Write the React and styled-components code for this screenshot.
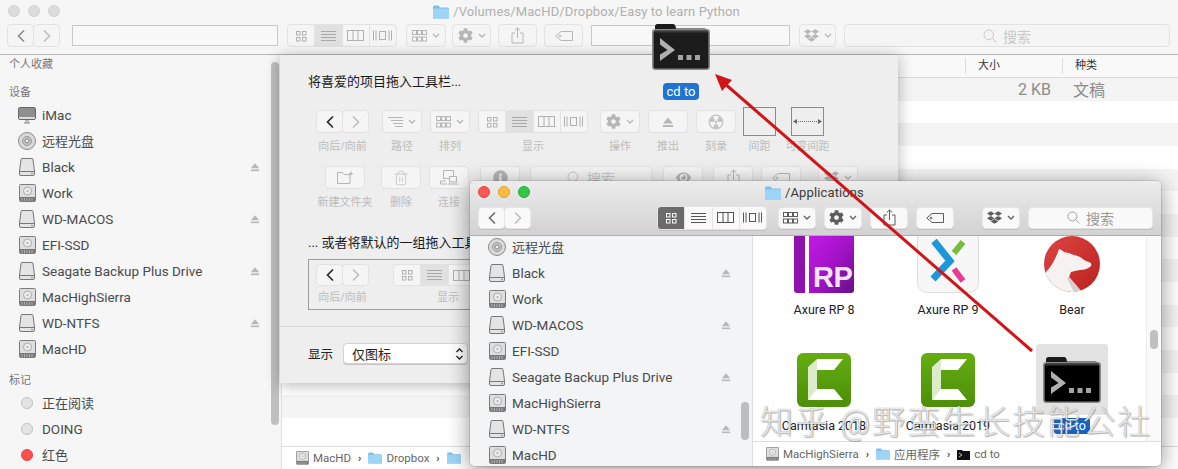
import React from "react";
import styled, { createGlobalStyle } from "styled-components";
import { FaCog, FaDropbox, FaInfoCircle, FaEye } from "react-icons/fa";
import { Trash2 } from "lucide-react";

const Global = createGlobalStyle`
  html, body { margin: 0; padding: 0; background: #8f8f8f; }
  body { font-family: "Roboto", "Noto Sans CJK SC", sans-serif; }
  * { box-sizing: border-box; }
`;

const Desktop = styled.div`
  position: relative;
  width: 1178px;
  height: 469px;
  overflow: hidden;
  background: #e9e9e9;
`;

const BackWindow = styled.div`
  position: absolute;
  inset: 0;
  display: flex;
  flex-direction: column;
  background: #f6f6f6;
  border-radius: 5px 5px 0 0;
`;

const BackHeader = styled.header`
  flex: none;
  height: 55px;
  background: #f6f6f6;
  border-bottom: 1px solid #b4b4b4;
`;

const TitleBar = styled.div`
  position: relative;
  height: 23px;
  display: flex;
  align-items: center;
  justify-content: center;
  gap: 4px;
  font-size: 13px;
  color: ${(p) => (p.$active ? "#3b3b3b" : "#b0b0b0")};
  letter-spacing: 0.12px;
`;

const BackTitle = styled(TitleBar)`
  padding-right: 5px;
`;

const FrontTitle = styled(TitleBar)`
  padding-right: 2px;
`;

const Lights = styled.div`
  position: absolute;
  left: 8px;
  top: 5px;
  display: flex;
  gap: 8px;
`;

const Light = styled.span`
  width: 12px;
  height: 12px;
  border-radius: 50%;
  background: ${(p) => p.$c};
  border: 1px solid ${(p) => p.$b};
`;

const ToolRow = styled.div`
  display: flex;
  align-items: center;
  height: 23px;
  padding-left: ${(p) => p.$pad}px;
  margin-top: ${(p) => p.$mt || 1}px;
`;

const Field = styled.div`
  flex: none;
  width: ${(p) => p.$w}px;
  height: 21px;
  margin-left: ${(p) => p.$ml}px;
  border: 1px solid #c9c9c9;
  background: #f8f8f8;
`;

const Btn = styled.div`
  flex: none;
  display: flex;
  align-items: center;
  justify-content: center;
  gap: 5px;
  width: ${(p) => p.$w || 39}px;
  height: ${(p) => p.$h || 23}px;
  margin-left: ${(p) => p.$ml || 0}px;
  border-radius: 4px;
  color: ${(p) => (p.$live ? "#5d5d5d" : "#b6b6b6")};
  background: ${(p) => (p.$live ? "#f9f9f9" : "#f5f5f5")};
  border: 1px solid ${(p) => (p.$live ? "#e6e6e6" : "#e2e2e2")};
  box-shadow: ${(p) => (p.$live ? "0 1px 0 #c2c2c2" : "none")};
`;

const NavPair = styled.div`
  flex: none;
  display: flex;
  margin-left: ${(p) => p.$ml || 0}px;
`;

const NavBtn = styled(Btn)`
  width: ${(p) => p.$w || 27}px;
  height: ${(p) => p.$h || 23}px;
  color: ${(p) => p.$ink};
  & + & { margin-left: -1px; }
`;

const Seg = styled.div`
  flex: none;
  display: flex;
  width: ${(p) => p.$w || 110}px;
  height: ${(p) => p.$h || 23}px;
  margin-left: ${(p) => p.$ml || 0}px;
  border-radius: 4px;
  overflow: hidden;
  border: 1px solid ${(p) => (p.$live ? "#e4e4e4" : "#e2e2e2")};
  background: ${(p) => (p.$live ? "#f9f9f9" : "#f5f5f5")};
  box-shadow: ${(p) => (p.$live ? "0 1px 0 #c2c2c2" : "none")};
`;

const SegCell = styled.div`
  flex: 1;
  display: flex;
  align-items: center;
  justify-content: center;
  color: ${(p) => (p.$on ? (p.$live ? "#fff" : "#a8a8a8") : p.$live ? "#555" : "#b0b0b0")};
  background: ${(p) => (p.$on ? (p.$live ? "#6b6b6b" : "#e1e1e1") : "transparent")};
  & + & { border-left: 1px solid ${(p) => (p.$live ? "#e4e4e4" : "#e6e6e6")}; }
`;

const SearchBox = styled(Btn)`
  font-size: 14px;
  color: ${(p) => (p.$live ? "#9a9a9a" : "#c8c8c8")};
  gap: 6px;
`;

const Body = styled.div`
  flex: 1;
  min-height: 0;
  display: flex;
`;

const Sidebar = styled.aside`
  position: relative;
  flex: none;
  width: ${(p) => p.$w}px;
  overflow: hidden;
  background: ${(p) => p.$bg};
  border-right: 1px solid #dedede;
`;

const SideList = styled.div`
  margin-top: ${(p) => p.$mt || 0}px;
`;

const SideHead = styled.div`
  height: 18px;
  line-height: 20px;
  margin: ${(p) => p.$mt || 0}px 0 1px;
  padding-left: 9px;
  font-size: 11px;
  color: #777;
`;

const SideRow = styled.div`
  display: flex;
  align-items: center;
  height: 26px;
  padding-left: 18px;
  font-size: 13.5px;
  color: #4a4a4a;
`;

const SideIcon = styled.span`
  flex: none;
  display: flex;
  justify-content: center;
  width: 18px;
  margin-right: 6px;
`;

const SideText = styled.span`
  flex: 1;
  white-space: nowrap;
  font-size: ${(p) => (p.$zh ? "13px" : "inherit")};
  margin-bottom: ${(p) => (p.$zh ? "2px" : "0")};
`;

const EjectMark = styled.span`
  flex: none;
  display: flex;
  width: 10px;
  margin-right: ${(p) => p.$mr}px;
  color: #b8b8b8;
`;

const TagDot = styled.span`
  width: 12px;
  height: 12px;
  border-radius: 50%;
  background: ${(p) => p.$c};
  border: 1px solid ${(p) => p.$b};
`;

const Thumb = styled.div`
  position: absolute;
  left: ${(p) => p.$x}px;
  top: ${(p) => p.$y}px;
  width: 8px;
  height: ${(p) => p.$h}px;
  border-radius: 4px;
  background: ${(p) => p.$c || "#c0c0c0"};
`;

const ListPane = styled.main`
  flex: 1;
  min-width: 0;
  display: flex;
  flex-direction: column;
  background: #fff;
`;

const ListHead = styled.div`
  flex: none;
  height: 23px;
  display: flex;
  align-items: center;
  border-bottom: 1px solid #d9d9d9;
  background: #f9f9f9;
  font-size: 11px;
  color: #333;
`;

const ColHead = styled.span`
  width: ${(p) => p.$w}px;
  margin-left: ${(p) => p.$ml || 0}px;
  padding-left: 12px;
  line-height: 16px;
  border-left: 1px solid #dcdcdc;
`;

const RowStack = styled.div`
  flex: 1;
  min-height: 0;
  overflow: hidden;
`;

const ListRow = styled.div`
  display: flex;
  align-items: center;
  height: 22.67px;
  background: ${(p) => (p.$odd ? "#f4f4f4" : "#fff")};
  font-size: 16px;
  color: #8b8b8b;
`;

const SizeCell = styled.span`
  width: 769px;
  text-align: right;
`;

const KindCell = styled.span`
  margin-left: 22px;
`;

const PathBar = styled.div`
  flex: none;
  height: ${(p) => p.$h}px;
  display: flex;
  align-items: center;
  gap: 4px;
  padding-left: ${(p) => p.$pad}px;
  border-top: 1px solid #dcdcdc;
  background: #fff;
  font-size: 11.5px;
  color: #666;
  white-space: nowrap;
`;

const Crumb = styled.span`
  margin: 0 3px;
  font-size: 11px;
  font-weight: 700;
  color: #444;
`;

/* customise sheet */
const Sheet = styled.section`
  position: absolute;
  left: 280px;
  top: 55px;
  width: 618px;
  height: 328px;
  overflow: hidden;
  background: #eeeeee;
  box-shadow: 0 2px 14px rgba(0, 0, 0, 0.3);
`;

const SheetTitle = styled.div`
  height: 20px;
  margin: ${(p) => p.$mt}px 0 0 28px;
  line-height: 20px;
  font-size: 13px;
  color: #1a1a1a;
  white-space: nowrap;
`;

const PaletteRow = styled.div`
  display: flex;
  margin: ${(p) => p.$mt}px 0 0 ${(p) => p.$ml}px;
`;

const Item = styled.div`
  flex: none;
  display: flex;
  flex-direction: column;
  align-items: center;
  width: ${(p) => p.$w}px;
  margin-left: ${(p) => p.$ml || 0}px;
`;

const ItemLabel = styled.div`
  margin-top: ${(p) => p.$mt ?? 6}px;
  line-height: 16px;
  font-size: 11px;
  color: #bcbcbc;
  white-space: nowrap;
`;

const SpaceBox = styled.div`
  width: 33px;
  height: 29px;
  margin-top: -3px;
  margin-bottom: -3px;
  display: flex;
  align-items: center;
  justify-content: center;
  border: 1px solid #8c8c8c;
  color: #666;
`;

const DefaultSet = styled.div`
  display: flex;
  width: 560px;
  height: 51px;
  margin: 6px 0 0 28px;
  padding: 4px 0 0 7px;
  border: 1px solid #9c9c9c;
`;

const Divider = styled.hr`
  margin: 16px 0 0;
  border: 0;
  border-top: 1px solid #d8d8d8;
`;

const Footer = styled.div`
  display: flex;
  align-items: center;
  height: 21px;
  margin: 16px 0 0 28px;
  font-size: 12.5px;
  color: #222;
`;

const Select = styled.div`
  display: flex;
  align-items: center;
  justify-content: space-between;
  width: 125px;
  height: 21px;
  margin-left: 10px;
  padding: 0 3px 0 8px;
  border-radius: 4px;
  background: #fff;
  border: 1px solid #d4d4d4;
  box-shadow: 0 1px 0 #c4c4c4;
  font-size: 13px;
`;

/* front window */
const FrontWindow = styled.section`
  position: absolute;
  left: 470px;
  top: 181px;
  width: 691px;
  height: 285px;
  display: flex;
  flex-direction: column;
  overflow: hidden;
  border-radius: 5px;
  background: #fff;
  box-shadow: 0 4px 22px rgba(0, 0, 0, 0.45), 0 0 0 1px rgba(0, 0, 0, 0.1);
`;

const FrontHeader = styled.header`
  flex: none;
  height: 55px;
  background: linear-gradient(#ececec, #d2d2d2);
  border-bottom: 1px solid #adadad;
`;

const FrontMain = styled.div`
  flex: 1;
  min-width: 0;
  display: flex;
  flex-direction: column;
`;

const IconArea = styled.div`
  flex: 1;
  min-height: 0;
  display: flex;
  overflow: hidden;
`;

const Grid = styled.div`
  flex: 1;
  display: grid;
  grid-template-columns: repeat(3, 124px);
  grid-auto-rows: 90px;
  row-gap: 26px;
  padding-left: 9px;
  margin-top: -8px;
`;

const Tile = styled.div`
  display: flex;
  flex-direction: column;
  align-items: center;
`;

const TileIcon = styled.div`
  width: 72px;
  height: 72px;
  display: flex;
  align-items: center;
  justify-content: center;
  border-radius: 3px;
  background: ${(p) => (p.$sel ? "#e3e3e3" : "transparent")};
`;

const TileLabel = styled.div`
  margin-top: 3px;
  padding: 0 4px;
  line-height: 16px;
  font-size: 12.5px;
  color: ${(p) => (p.$sel ? "#fff" : "#222")};
  background: ${(p) => (p.$sel ? "#1762c4" : "transparent")};
  border-radius: 3px;
`;

const ScrollTrack = styled.div`
  position: relative;
  flex: none;
  width: 15px;
  background: #fafafa;
  border-left: 1px solid #ececec;
`;

/* overlays */
const DragIcon = styled.div`
  position: absolute;
  left: 652px;
  top: 24px;
  display: flex;
  flex-direction: column;
  align-items: center;
  width: 58px;
`;

const DragLabel = styled.div`
  margin-top: 13px;
  padding: 0 4px;
  height: 17px;
  line-height: 17px;
  border-radius: 4px;
  background: #1f74d3;
  color: #fff;
  font-size: 13px;
  white-space: nowrap;
`;

const ArrowLayer = styled.svg`
  position: absolute;
  inset: 0;
  width: 100%;
  height: 100%;
  pointer-events: none;
`;

const Watermark = styled.div`
  position: absolute;
  left: 760px;
  top: 402px;
  font-size: 33px;
  font-weight: 300;
  line-height: 42px;
  letter-spacing: 2px;
  white-space: nowrap;
  color: rgba(255, 255, 255, 0.82);
  text-shadow: 0 0 1px rgba(70, 70, 70, 0.7), 1px 1px 1px rgba(90, 90, 90, 0.4);
  pointer-events: none;
`;

/* drawings */
const S = ({ w, h, children, fill = "none", sw = 1 }) => (
  <svg width={w} height={h} viewBox={`0 0 ${w} ${h}`} fill={fill} stroke={fill === "none" ? "currentColor" : "none"} strokeWidth={sw}>
    {children}
  </svg>
);
const Left = () => <S w={10} h={14} sw={1.6}><path d="M8 1.5 2.5 7 8 12.5" /></S>;
const Right = () => <S w={10} h={14} sw={1.6}><path d="M2 1.5 7.5 7 2 12.5" /></S>;
const Down = () => <S w={8} h={6} sw={1.3}><path d="M1 1 4 4 7 1" /></S>;
const IcoGrid = () => <S w={12} h={12}><rect x="1.5" y="1.5" width="3.5" height="3.5" /><rect x="7.5" y="1.5" width="3.5" height="3.5" /><rect x="1.5" y="7.5" width="3.5" height="3.5" /><rect x="7.5" y="7.5" width="3.5" height="3.5" /></S>;
const IcoList = () => <S w={15} h={12}><path d="M0 1.5h15M0 4.5h15M0 7.5h15M0 10.5h15" /></S>;
const IcoCols = () => <S w={17} h={11}><rect x=".5" y=".5" width="16" height="10" /><path d="M6 .5v10M11 .5v10" /></S>;
const IcoFlow = () => <S w={19} h={11}><rect x="6.5" y="1.5" width="6" height="8" /><path d="M.5 .5v10M3 .5v10M16 .5v10M18.5 .5v10" /></S>;
const IcoSix = () => <S w={15} h={12}>{[0, 1, 2].map((i) => <React.Fragment key={i}><rect x={.5 + i * 5} y=".5" width="4" height="4" /><rect x={.5 + i * 5} y="7" width="4" height="4" /></React.Fragment>)}</S>;
const IcoPath = () => <S w={15} h={12}><path d="M0 1.5h15M3 4.5h12M5 7.5h10M7 10.5h8" /></S>;
const IcoEject = ({ w = 12 }) => <svg width={w} height={w} viewBox="0 0 12 12" fill="currentColor"><path d="M6 1.5 11 7.5H1Z" /><rect x="1" y="9" width="10" height="2" /></svg>;
const IcoShare = () => <S w={13} h={17}><path d="M4 6H1v10h11V6H9M6.5 11V1M3.8 3.5 6.5 1l2.7 2.5" /></S>;
const IcoTag = () => <S w={18} h={10}><path d="M17.5 .5H6L.8 5 6 9.5h11.5Z" /><circle cx="5" cy="5" r=".9" /></S>;
const IcoSearch = ({ s = 14 }) => <svg width={s} height={s} viewBox="0 0 14 14" fill="none" stroke="currentColor" strokeWidth="1"><circle cx="5.8" cy="5.8" r="4.8" /><path d="m9.3 9.3 4 4" /></svg>;
const IcoNewFolder = () => <S w={17} h={13}><path d="M.5 12.5V1.5h5l1.5 2h6v9Z" /><path d="M14 .5v4M12 2.500h4" /></S>;
const IcoConnect = () => <S w={19} h={15}><rect x="3.500" y=".5" width="10" height="8" /><path d="M6 11h-5.500v3h6.500" /><rect x="9.500" y="6.500" width="7" height="5.500" fill="#f4f4f4" /><path d="M8 14h10.500" /></S>;
const IcoBurn = () => (
  <svg width="16" height="16" viewBox="0 0 16 16">
    <circle cx="8" cy="8" r="7.500" fill="#c4c4c4" />
    <circle cx="8" cy="8" r="6.200" fill="#f5f5f5" />
    <path d="M8 8 4.900 2.600A6.200 6.200 0 0 0 1.800 8ZM8 8 14.200 8A6.200 6.200 0 0 0 11.100 2.600ZM8 8 4.900 13.400A6.200 6.200 0 0 0 11.100 13.400Z" fill="#c4c4c4" />
    <circle cx="8" cy="8" r="2" fill="#f5f5f5" />
    <circle cx="8" cy="8" r="1.200" fill="#c4c4c4" />
  </svg>
);
const SpaceArrows = () => <S w={31} h={9}><path d="M6 4.500h19" strokeDasharray="1 1" /><path d="M5 2v5L1 4.500ZM26 2v5l4-2.500Z" fill="currentColor" stroke="none" /></S>;
const UpDown = () => <S w={9} h={14} sw={1.3}><path d="M1.500 5 4.500 2l3 3M1.500 9l3 3 3-3" /></S>;

const Monitor = () => (
  <svg width="18" height="17" viewBox="0 0 18 17" fill="none">
    <rect x=".5" y=".5" width="17" height="12" rx="1.500" fill="#dcdcdc" stroke="#666" />
    <rect x="1" y="1" width="16" height="9" fill="#8e8e8e" />
    <path d="M6 16h6M8 13v3M10 13v3" stroke="#888" />
  </svg>
);
const Disc = () => (
  <svg width="18" height="18" viewBox="0 0 18 18">
    <circle cx="9" cy="9" r="8.500" fill="#dadada" stroke="#8a8a8a" />
    <circle cx="9" cy="9" r="4.500" fill="#c4c4c4" stroke="#9a9a9a" />
    <circle cx="9" cy="9" r="2" fill="#eee" stroke="#888" />
  </svg>
);
const Drive = () => (
  <svg width="16" height="18" viewBox="0 0 16 18">
    <path d="M2 1.500Q2.200 .5 3 .5H13q.8 0 1 1L15.500 13v3q0 1.500-1.500 1.500H2Q.5 17.500.5 16v-3Z" fill="#e4e4e4" stroke="#777" />
    <path d="M.5 13.500h15" stroke="#777" />
    <circle cx="13" cy="15.500" r=".7" fill="#666" />
  </svg>
);
const Hdd = ({ s = 17 }) => (
  <svg width={s} height={s * 18 / 17} viewBox="0 0 17 18">
    <rect x=".5" y=".5" width="16" height="17" rx="1" fill="#dedede" stroke="#7c7c7c" />
    <circle cx="8.500" cy="7" r="4" fill="#ececec" stroke="#aaa" />
    <circle cx="8.500" cy="7" r="1.200" fill="#bbb" />
    <rect x="1" y="13" width="15" height="4" fill="#777" />
    <path d="M3 14v3M5.500 14v3M8 14v3M10.500 14v3M13 14v3" stroke="#ddd" strokeWidth=".6" />
  </svg>
);
const Folder = ({ w = 16, h = 14, body = "#9ed4f5", tab = "#7cc0ea" }) => (
  <svg width={w} height={h} viewBox="0 0 16 14">
    <path d="M0 2q0-1.500 1.500-1.500h4L7 2.500h7.500Q16 2.500 16 4v8.500q0 1-1 1H1q-1 0-1-1Z" fill={tab} />
    <rect y="3.500" width="16" height="10" rx="1" fill={body} />
  </svg>
);
const TermMini = () => (
  <svg width="13" height="11" viewBox="0 0 13 11"><path d="M0 1h5l1 1h7v9H0Z" fill="#111" /><path d="m2 4 3 2-3 2" stroke="#bbb" fill="none" /></svg>
);
const TerminalFolder = ({ body = "#0a0a0a" }) => (
  <svg width="58" height="46" viewBox="0 0 58 46">
    <path d="M3 9V2.500Q3 0 5.500 0H21q2 0 2.500 2l.5 2.500h28.500Q55 4.500 55 7v2Z" fill="#1a1a1a" />
    <rect x=".8" y="5.800" width="56.400" height="39.400" rx="2.500" fill={body} stroke="#8a8a8a" strokeWidth="1.600" />
    <rect x="2" y="7" width="54" height="1.500" fill="#3a3a3a" />
    <path d="M8 14 23 26 8 37V30.500L15.500 26 8 20.500Z" fill="#b0b0b0" />
    <rect x="26" y="31" width="5" height="5" fill="#a3a3a3" />
    <rect x="34.500" y="31" width="5" height="5" fill="#a3a3a3" />
    <rect x="43" y="31" width="5" height="5" fill="#a3a3a3" />
  </svg>
);
const AxureRP = () => (
  <svg width="60" height="60" viewBox="0 0 60 60">
    <defs>
      <linearGradient id="axg" x1="0" y1="0" x2="1" y2="1"><stop offset="0" stopColor="#c21be6" /><stop offset=".5" stopColor="#a512c9" /><stop offset="1" stopColor="#661186" /></linearGradient>
    </defs>
    <path d="M0 0h11v59H3q-3 0-3-3Z" fill="#8f12ad" />
    <path d="M15 0h45v56q0 3-3 3H15Z" fill="url(#axg)" />
    <text x="19" y="53" fontFamily="Liberation Sans, sans-serif" fontSize="29" fontWeight="700" fill="#f4e4f8" letterSpacing="-.5">RP</text>
  </svg>
);
const AxureX = () => (
  <svg width="62" height="60" viewBox="0 0 62 60">
    <rect x=".5" y="-6" width="61" height="64.500" rx="10" fill="#f7f7f7" stroke="#dcdcdc" />
    <path d="M17 7 33 27 16 45" fill="none" stroke="#1f96d8" strokeWidth="7" />
    <path d="M37 19 46 8" fill="none" stroke="#77bc3f" strokeWidth="6" />
    <path d="M37 35 46 47" fill="none" stroke="#e83b93" strokeWidth="6" />
  </svg>
);
const Bear = () => (
  <svg width="56" height="56" viewBox="0 0 56 56">
    <defs>
      <linearGradient id="beg" x1="0" y1="0" x2="1" y2="1"><stop offset="0" stopColor="#dd4542" /><stop offset="1" stopColor="#b8221f" /></linearGradient>
      <clipPath id="bec"><circle cx="28" cy="28" r="28" /></clipPath>
    </defs>
    <circle cx="28" cy="28" r="28" fill="url(#beg)" />
    <g clipPath="url(#bec)">
      <path d="M0 38C7 32 12 22 15 13Q18 14 20 16Q26 17 30 19Q36 20 40 24L47 27Q48 30 46 31Q42 34 36 34Q30 35 27 36L25 41 38 56H0Z" fill="#f6f2f1" />
      <path d="M25 41 38 56H30L23 42Z" fill="#d4cfce" />
    </g>
  </svg>
);
const Camtasia = () => (
  <svg width="54" height="54" viewBox="0 0 54 54">
    <defs>
      <linearGradient id="cag" x1="0" y1="0" x2="0" y2="1"><stop offset="0" stopColor="#66ad12" /><stop offset="1" stopColor="#4c8e08" /></linearGradient>
    </defs>
    <rect width="54" height="54" rx="6" fill="url(#cag)" />
    <path d="M20 6H46L37 17H20Z" fill="#fff" />
    <path d="M11 14 20 6V38L11 47Z" fill="#dcebca" />
    <path d="M11 47 20 36H37L46 47Z" fill="#fff" />
  </svg>
);

const devices = [
  [Drive, "Black", true], [Hdd, "Work", false], [Drive, "WD-MACOS", true], [Hdd, "EFI-SSD", false],
  [Drive, "Seagate Backup Plus Drive", true], [Hdd, "MacHighSierra", false], [Drive, "WD-NTFS", true], [Hdd, "MacHD", false],
];

const SideRows = ({ mr }) => (
  <>
    <SideRow><SideIcon><Disc /></SideIcon><SideText $zh>远程光盘</SideText></SideRow>
    {devices.map(([Ico, name, ej]) => (
      <SideRow key={name}>
        <SideIcon><Ico /></SideIcon>
        <SideText>{name}</SideText>
        {ej && <EjectMark $mr={mr}><IcoEject w={10} /></EjectMark>}
      </SideRow>
    ))}
  </>
);

const ViewCells = ({ on, live }) => (
  [IcoGrid, IcoList, IcoCols, IcoFlow].map((I, i) => (
    <SegCell key={i} $on={on === i} $live={live}><I /></SegCell>
  ))
);

const ArrangeBtn = (p) => <Btn {...p}><IcoSix /><Down /></Btn>;
const GearBtn = (p) => <Btn {...p}><FaCog size={15} /><Down /></Btn>;
const DropBtn = (p) => <Btn {...p}><FaDropbox size={15} /><Down /></Btn>;

const Nav = ({ ink, ml, h, live }) => (
  <NavPair $ml={ml}>
    <NavBtn $h={h} $live={live} $ink={ink}><Left /></NavBtn>
    <NavBtn $h={h} $live={live} $ink="#bdbdbd"><Right /></NavBtn>
  </NavPair>
);

export default function App() {
  return (
    <Desktop>
      <Global />
      <BackWindow>
        <BackHeader>
          <BackTitle>
            <Lights>
              <Light $c="#dcdcdc" $b="#d2d2d2" /><Light $c="#dcdcdc" $b="#d2d2d2" /><Light $c="#dcdcdc" $b="#d2d2d2" />
            </Lights>
            <Folder />
            /Volumes/MacHD/Dropbox/Easy to learn Python
          </BackTitle>
          <ToolRow $pad={7}>
            <Nav ink="#8a8a8a" />
            <Field $ml={12} $w={206} />
            <Seg $ml={9}><ViewCells on={1} /></Seg>
            <ArrangeBtn $ml={9} $w={40} />
            <GearBtn $ml={6} />
            <Btn $ml={7}><IcoShare /></Btn>
            <Btn $ml={7}><IcoTag /></Btn>
            <Field $ml={8} $w={199} />
            <DropBtn $ml={9} $w={37} />
            <SearchBox $ml={8} $w={326}><IcoSearch />搜索</SearchBox>
          </ToolRow>
        </BackHeader>
        <Body>
          <Sidebar $w={282} $bg="#f6f6f6">
            <SideHead>个人收藏</SideHead>
            <SideHead $mt={10}>设备</SideHead>
            <SideRow><SideIcon><Monitor /></SideIcon><SideText>iMac</SideText></SideRow>
            <SideRows mr={21} />
            <SideHead $mt={9}>标记</SideHead>
            <SideRow><SideIcon><TagDot $c="#e4e4e4" $b="#c0c0c0" /></SideIcon><SideText $zh>正在阅读</SideText></SideRow>
            <SideRow><SideIcon><TagDot $c="#e4e4e4" $b="#c0c0c0" /></SideIcon><SideText>DOING</SideText></SideRow>
            <SideRow><SideIcon><TagDot $c="#f8504b" $b="#ea4440" /></SideIcon><SideText $zh>红色</SideText></SideRow>
            <Thumb $x={271} $y={7} $h={363} />
          </Sidebar>
          <ListPane>
            <ListHead>
              <ColHead $ml={683} $w={97}>大小</ColHead>
              <ColHead $w={100}>种类</ColHead>
            </ListHead>
            <RowStack>
              {Array.from({ length: 16 }, (_, i) => (
                <ListRow key={i} $odd={i % 2 === 0}>
                  {i === 0 && <><SizeCell>2 KB</SizeCell><KindCell>文稿</KindCell></>}
                </ListRow>
              ))}
            </RowStack>
            <PathBar $h={23} $pad={14}>
              <Hdd s={13} />MacHD<Crumb>›</Crumb><Folder w={14} h={12} />Dropbox<Crumb>›</Crumb><Folder w={14} h={12} />
            </PathBar>
          </ListPane>
        </Body>
      </BackWindow>

      <Sheet>
        <SheetTitle $mt={17}>将喜爱的项目拖入工具栏...</SheetTitle>
        <PaletteRow $mt={18} $ml={36}>
          <Item $w={53}><Nav ink="#222" /><ItemLabel>向后/向前</ItemLabel></Item>
          <Item $w={40} $ml={13}><Btn $w={40}><IcoPath /><Down /></Btn><ItemLabel>路径</ItemLabel></Item>
          <Item $w={40} $ml={8}><ArrangeBtn $w={40} /><ItemLabel>排列</ItemLabel></Item>
          <Item $w={110} $ml={8}><Seg><ViewCells on={1} /></Seg><ItemLabel>显示</ItemLabel></Item>
          <Item $w={40} $ml={12}><GearBtn $w={40} /><ItemLabel>操作</ItemLabel></Item>
          <Item $w={40} $ml={8}><Btn $w={40}><IcoEject /></Btn><ItemLabel>推出</ItemLabel></Item>
          <Item $w={40} $ml={8}><Btn $w={40}><IcoBurn /></Btn><ItemLabel>刻录</ItemLabel></Item>
          <Item $w={33} $ml={7}><SpaceBox /><ItemLabel>间距</ItemLabel></Item>
          <Item $w={33} $ml={15}><SpaceBox><SpaceArrows /></SpaceBox><ItemLabel>可变间距</ItemLabel></Item>
        </PaletteRow>
        <PaletteRow $mt={11} $ml={45}>
          <Item $w={40}><Btn $w={40}><IcoNewFolder /></Btn><ItemLabel>新建文件夹</ItemLabel></Item>
          <Item $w={40} $ml={16}><Btn $w={40}><Trash2 size={16} strokeWidth={1} /></Btn><ItemLabel>删除</ItemLabel></Item>
          <Item $w={40} $ml={8}><Btn $w={40}><IcoConnect /></Btn><ItemLabel>连接</ItemLabel></Item>
          <Item $w={40} $ml={11}><Btn $w={40}><FaInfoCircle size={15} /></Btn><ItemLabel>显示简介</ItemLabel></Item>
          <Item $w={122} $ml={10}><SearchBox $w={122}><IcoSearch />搜索</SearchBox><ItemLabel>搜索</ItemLabel></Item>
          <Item $w={40} $ml={11}><Btn $w={40}><FaEye size={15} /></Btn><ItemLabel>快速查看</ItemLabel></Item>
          <Item $w={40} $ml={10}><Btn $w={40}><IcoShare /></Btn><ItemLabel>共享</ItemLabel></Item>
          <Item $w={40} $ml={8}><Btn $w={40}><IcoTag /></Btn><ItemLabel>标签</ItemLabel></Item>
          <Item $w={40} $ml={17}><DropBtn $w={40} /><ItemLabel>Dropbox</ItemLabel></Item>
        </PaletteRow>
        <SheetTitle $mt={22}>... 或者将默认的一组拖入工具栏。</SheetTitle>
        <DefaultSet>
          <Item $w={53}><Nav ink="#222" h={22} /><ItemLabel $mt={4}>向后/向前</ItemLabel></Item>
          <Item $w={110} $ml={24}><Seg $h={22}><ViewCells on={1} /></Seg><ItemLabel $mt={4}>显示</ItemLabel></Item>
        </DefaultSet>
        <Divider />
        <Footer>
          显示
          <Select>仅图标<UpDown /></Select>
        </Footer>
      </Sheet>

      <FrontWindow>
        <FrontHeader>
          <FrontTitle $active>
            <Lights>
              <Light $c="#fc5753" $b="#df4744" /><Light $c="#fdbc40" $b="#de9f34" /><Light $c="#33c748" $b="#27aa35" />
            </Lights>
            <Folder />
            /Applications
          </FrontTitle>
          <ToolRow $pad={8} $mt={2}>
            <Nav ink="#6a6a6a" live h={22} />
            <Seg $live $ml={126} $h={24}><ViewCells on={0} live /></Seg>
            <ArrangeBtn $live $ml={11} $w={38} $h={22} />
            <GearBtn $live $ml={8} $w={38} $h={22} />
            <Btn $live $ml={8} $w={38} $h={22}><IcoShare /></Btn>
            <Btn $live $ml={8} $w={38} $h={22}><IcoTag /></Btn>
            <DropBtn $live $ml={28} $w={38} $h={22} />
            <SearchBox $live $ml={8} $w={125} $h={22}><IcoSearch s={13} />搜索</SearchBox>
          </ToolRow>
        </FrontHeader>
        <Body>
          <Sidebar $w={283} $bg="#f3f4f6">
            <SideList $mt={-2}><SideRows mr={21} /></SideList>
            <Thumb $x={271} $y={166} $h={38} $c="#bdbdbd" />
          </Sidebar>
          <FrontMain>
            <IconArea>
              <Grid>
                <Tile><TileIcon><AxureRP /></TileIcon><TileLabel>Axure RP 8</TileLabel></Tile>
                <Tile><TileIcon><AxureX /></TileIcon><TileLabel>Axure RP 9</TileLabel></Tile>
                <Tile><TileIcon><Bear /></TileIcon><TileLabel>Bear</TileLabel></Tile>
                <Tile><TileIcon><Camtasia /></TileIcon><TileLabel>Camtasia 2018</TileLabel></Tile>
                <Tile><TileIcon><Camtasia /></TileIcon><TileLabel>Camtasia 2019</TileLabel></Tile>
                <Tile><TileIcon $sel><TerminalFolder body="#000" /></TileIcon><TileLabel $sel>cd to</TileLabel></Tile>
              </Grid>
              <ScrollTrack><Thumb $x={3} $y={94} $h={19} /></ScrollTrack>
            </IconArea>
            <PathBar $h={25} $pad={13}>
              <Hdd s={13} />MacHighSierra<Crumb>›</Crumb><Folder w={14} h={12} />应用程序<Crumb>›</Crumb><TermMini />cd to
            </PathBar>
          </FrontMain>
        </Body>
      </FrontWindow>

      <DragIcon>
        <TerminalFolder body="#1c1c1c" />
        <DragLabel>cd to</DragLabel>
      </DragIcon>

      <ArrowLayer viewBox="0 0 1178 469">
        <path d="M1032 351 724 83" stroke="#cf1518" strokeWidth="3" fill="none" />
        <path d="M715 74 732 80 722 91Z" fill="#cf1518" />
      </ArrowLayer>

      <Watermark>知乎 @野蛮生长技能公社</Watermark>
    </Desktop>
  );
}
